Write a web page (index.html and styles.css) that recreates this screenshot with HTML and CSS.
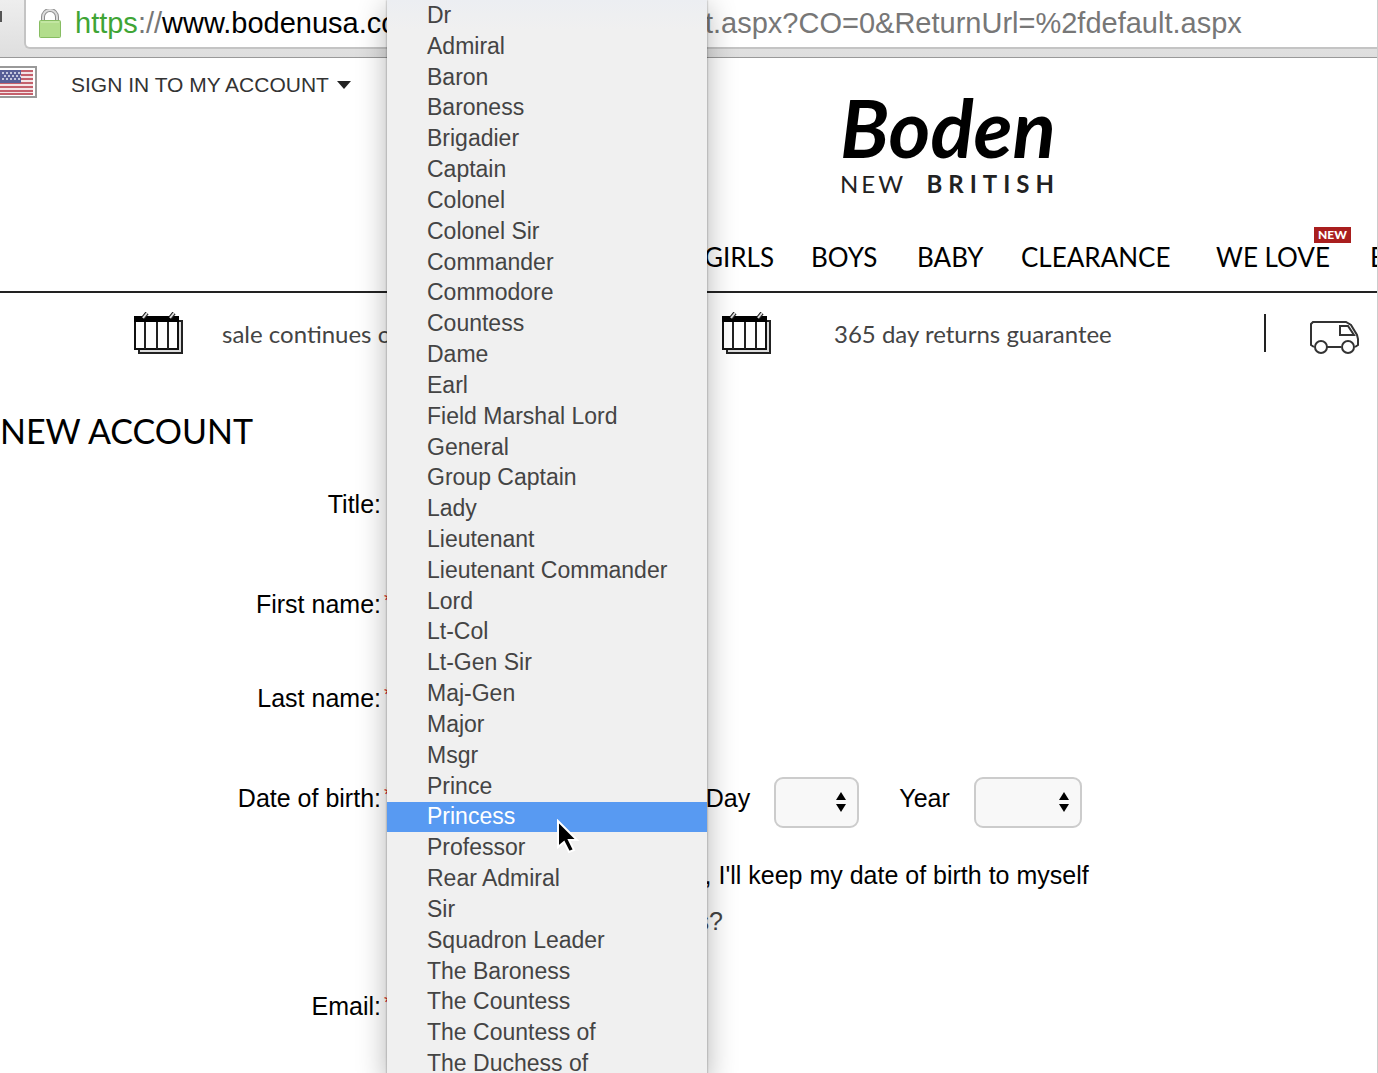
FILE: index.html
```html
<!DOCTYPE html>
<html lang="en">
<head>
    <meta charset="UTF-8">
    <meta name="viewport" content="width=device-width, initial-scale=1.0">
    <title>Boden - New Account</title>
    <link rel="stylesheet" href="styles.css">
</head>
<body>
    <!-- Browser toolbar -->
    <div class="toolbar">
        <span class="toolbar-button"></span>
        <div class="address">
            <svg class="lock" width="22" height="30" viewBox="0 0 22 30">
                <path d="M4 13V8a7 7 0 0 1 14 0v5" fill="none" stroke="#8c8c8c" stroke-width="4"/>
                <path d="M4 13V8a7 7 0 0 1 14 0v5" fill="none" stroke="#dcdcdc" stroke-width="2"/>
                <rect x="0.5" y="11.500" width="21" height="17" rx="1" fill="#b2dd8c" stroke="#87bd62"/>
                <path d="M2 13h18" stroke="#d3efb8"/>
            </svg>
            <div class="url">
                <span class="url-host"><span class="secure">https</span><span class="muted">://</span>www.bodenusa.com</span>
                <span class="url-path">t.aspx?CO=0&amp;ReturnUrl=%2fdefault.aspx</span>
            </div>
        </div>
    </div>

    <header>
        <div class="account-bar">
            <svg class="flag" width="37" height="32" viewBox="0 0 37 32">
                <rect x="-2" y="1" width="38" height="30" fill="#fff" stroke="#999" stroke-width="2"/>
                <rect x="0" y="4" width="33" height="25" fill="#f3e4e6"/>
                <path d="M0 5h33M0 9h33M0 13h33M0 17h33M0 21h33M0 25h33M0 28h33" stroke="#c4606c" stroke-width="2"/>
                <rect x="0" y="4" width="21" height="13" fill="#585f97"/>
                <path d="M2 7h19M4 10h17M2 13h19" stroke="#c5c8de" stroke-width="2" stroke-dasharray="2 2"/>
            </svg>
            <a href="#" class="sign-in">SIGN IN TO MY ACCOUNT
                <svg width="14" height="8" viewBox="0 0 14 8"><path d="M0 0h14L7 8z" fill="#222"/></svg>
            </a>
        </div>
        <a href="#" class="logo">
            <span class="logo-name">Boden</span>
            <span class="logo-tag">NEW <b>BRITISH</b></span>
        </a>
        <nav>
            <a href="#">GIRLS</a>
            <a href="#">BOYS</a>
            <a href="#">BABY</a>
            <a href="#">CLEARANCE</a>
            <a href="#">WE LOVE<span class="badge">NEW</span></a>
            <a href="#">EXPLORE</a>
        </nav>
    </header>

    <!-- Promotions strip -->
    <div class="promos">
        <div class="promo">
            <svg width="50" height="42" viewBox="0 0 50 42">
                <path d="M5 37v4h43V9h-4" fill="#ddd" stroke="#222" stroke-width="2"/>
                <rect x="1" y="6" width="43" height="31" fill="#fff" stroke="#111" stroke-width="2"/>
                <path d="M0 4h45v6H0z" fill="#000"/>
                <path d="M11 10v27M23 10v27M34 10v27" stroke="#222" stroke-width="2"/>
                <path d="M9 6l4-5M36 6l4-5" stroke="#222" stroke-width="4"/>
                <path d="M9 6l4-5M36 6l4-5" stroke="#ddd" stroke-width="2"/>
            </svg>
            <span>sale continues online</span>
        </div>
        <div class="promo promo-wide">
            <svg width="50" height="42" viewBox="0 0 50 42">
                <path d="M5 37v4h43V9h-4" fill="#ddd" stroke="#222" stroke-width="2"/>
                <rect x="1" y="6" width="43" height="31" fill="#fff" stroke="#111" stroke-width="2"/>
                <path d="M0 4h45v6H0z" fill="#000"/>
                <path d="M11 10v27M23 10v27M34 10v27" stroke="#222" stroke-width="2"/>
                <path d="M9 6l4-5M36 6l4-5" stroke="#222" stroke-width="4"/>
                <path d="M9 6l4-5M36 6l4-5" stroke="#ddd" stroke-width="2"/>
            </svg>
            <span>365 day returns guarantee</span>
        </div>
        <div class="promo">
            <svg class="van" width="50" height="34" viewBox="0 0 50 34" fill="none" stroke="#333" stroke-width="2">
                <path d="M4 26L1 24V3l2-2h33l5 3 6 10 1 4v6l-3 2M17 26h14"/>
                <path d="M31 5h7l6 9H30V5z"/>
                <circle cx="11" cy="26" r="6"/>
                <circle cx="38" cy="26" r="6"/>
            </svg>
        </div>
    </div>

    <main>
        <h1>NEW ACCOUNT</h1>
        <form>
            <div class="row row-tall">
                <label for="title">Title:</label>
                <div class="field field-plain">
                    <select id="title"><option>Princess</option></select>
                </div>
            </div>
            <div class="row">
                <label for="firstName">First name:</label>
                <div class="field"><span class="required">*</span><input type="text" id="firstName"></div>
            </div>
            <div class="row row-tall">
                <label for="lastName">Last name:</label>
                <div class="field"><span class="required">*</span><input type="text" id="lastName"></div>
            </div>
            <div class="row row-birth">
                <label for="month">Date of birth:</label>
                <div class="field">
                    <span class="required">*</span>
                    <div class="month"><select id="month"><option></option></select></div>
                    <label for="day">Day</label>
                    <span class="select-box">
                        <select id="day" class="select-day"><option></option></select>
                        <svg width="10" height="20" viewBox="0 0 10 20"><path d="M0 8h10L5 0zM0 12h10l-5 8z"/></svg>
                    </span>
                    <label for="year" class="year-label">Year</label>
                    <span class="select-box">
                        <select id="year" class="select-year"><option></option></select>
                        <svg width="10" height="20" viewBox="0 0 10 20"><path d="M0 8h10L5 0zM0 12h10l-5 8z"/></svg>
                    </span>
                </div>
            </div>
            <div class="note">
                <input type="checkbox" id="noBirth">
                <label for="noBirth">No thanks, I'll keep my date of birth to myself</label>
            </div>
            <div class="why"><a href="#">Why do we ask this?</a></div>
            <div class="row">
                <label for="email">Email:</label>
                <div class="field"><span class="required">*</span><input type="email" id="email"></div>
            </div>
        </form>
    </main>

    <!-- Open list of the title drop-down -->
    <ul class="menu" role="listbox" aria-label="Title">
        <li role="option">Dr</li>
        <li role="option">Admiral</li>
        <li role="option">Baron</li>
        <li role="option">Baroness</li>
        <li role="option">Brigadier</li>
        <li role="option">Captain</li>
        <li role="option">Colonel</li>
        <li role="option">Colonel Sir</li>
        <li role="option">Commander</li>
        <li role="option">Commodore</li>
        <li role="option">Countess</li>
        <li role="option">Dame</li>
        <li role="option">Earl</li>
        <li role="option">Field Marshal Lord</li>
        <li role="option">General</li>
        <li role="option">Group Captain</li>
        <li role="option">Lady</li>
        <li role="option">Lieutenant</li>
        <li role="option">Lieutenant Commander</li>
        <li role="option">Lord</li>
        <li role="option">Lt-Col</li>
        <li role="option">Lt-Gen Sir</li>
        <li role="option">Maj-Gen</li>
        <li role="option">Major</li>
        <li role="option">Msgr</li>
        <li role="option">Prince</li>
        <li role="option" class="active" aria-selected="true">Princess
            <svg class="cursor" width="24" height="38" viewBox="0 0 24 38">
                <path d="M2 2v26l6-5 5 10 5-2-5-10h8z" fill="#000" stroke="#fff" stroke-width="2"/>
            </svg>
        </li>
        <li role="option">Professor</li>
        <li role="option">Rear Admiral</li>
        <li role="option">Sir</li>
        <li role="option">Squadron Leader</li>
        <li role="option">The Baroness</li>
        <li role="option">The Countess</li>
        <li role="option">The Countess of</li>
        <li role="option">The Duchess of</li>
    </ul>
</body>
</html>
```
FILE: styles.css
```css
:root {
    --text-color: #000;
    --menu-bg: #f0f0f0;
    --highlight: #589af2;
    --brand-font: Lato, sans-serif;
}

* {
    box-sizing: border-box;
}

body {
    margin: 0;
    position: relative;
    height: 100vh;
    overflow: hidden;
    border-right: 1px solid #ccc;
    font-family: "Liberation Sans", Arial, sans-serif;
    font-size: 25px;
    color: var(--text-color);
    background-color: #fff;
}

a {
    color: inherit;
    text-decoration: none;
}

svg {
    display: block;
    flex: none;
}

/* Browser toolbar */
.toolbar {
    display: flex;
    align-items: flex-start;
    height: 58px;
    border-bottom: 1px solid #999;
    background: linear-gradient(#eee, #dedede);
}

.toolbar-button {
    width: 2px;
    height: 11px;
    margin: 11px 22px 0 0;
    background-color: #555;
}

.address {
    display: flex;
    align-items: center;
    flex: 1;
    height: 49px;
    padding-left: 13px;
    border: 2px solid #c4c4c4;
    border-width: 0 0 2px 2px;
    border-radius: 0 0 0 6px;
    background-color: #fff;
}

.url {
    display: flex;
    margin-left: 14px;
    font-size: 29px;
    white-space: nowrap;
}

.url-host {
    width: 630px;
    color: #000;
}

.secure {
    color: #3fa535;
}

.muted,
.url-path {
    color: #777;
}

/* Site header */
header {
    display: grid;
    grid-template-columns: 840px 1fr;
    grid-template-rows: 164px 69px;
    border-bottom: 2px solid #222;
    margin-bottom: -2px;
}

.account-bar {
    display: flex;
    align-items: flex-start;
    margin-top: 8px;
}

.sign-in {
    display: flex;
    align-items: center;
    gap: 8px;
    margin-left: 34px;
    font-size: 21px;
    line-height: 38px;
    color: #333;
}

.logo {
    width: 220px;
    padding-top: 24px;
    font-family: var(--brand-font);
    color: #000;
}

.logo-name {
    display: block;
    font-size: 80px;
    line-height: 90px;
    font-style: italic;
    font-weight: 700;
}

.logo-tag {
    display: flex;
    justify-content: space-between;
    font-size: 24px;
    line-height: 24px;
    letter-spacing: 3px;
    color: #222;
}

.logo-tag b {
    letter-spacing: 6px;
}

nav {
    grid-column: 1 / 3;
    display: grid;
    grid-template-columns: 107px 106px 104px 195px 154px auto;
    align-items: center;
    padding-left: 704px;
    overflow: hidden;
    font-family: var(--brand-font);
    font-size: 26px;
    white-space: nowrap;
}

nav a {
    position: relative;
}

.badge {
    position: absolute;
    top: -14px;
    left: 98px;
    padding: 0 4px;
    font-size: 12px;
    line-height: 16px;
    font-weight: 900;
    color: #fff;
    background-color: #a91e1e;
}

/* Promotions */
.promos {
    display: flex;
    height: 88px;
    padding: 21px 0 0 88px;
    overflow: hidden;
    font-family: var(--brand-font);
    font-size: 24px;
    color: #444;
}

.promo {
    display: flex;
    align-items: center;
    flex: none;
    gap: 38px;
    width: 588px;
    height: 42px;
    padding-left: 46px;
}

.promo + .promo {
    background: linear-gradient(#222, #222) 0 2px / 2px 38px no-repeat;
}

.promo-wide {
    gap: 62px;
}

.van {
    margin-top: 10px;
}

/* Registration form */
h1 {
    margin: 30px 0 0;
    font-family: var(--brand-font);
    font-size: 34px;
    line-height: 44px;
    font-weight: 400;
}

form {
    padding-top: 29px;
    line-height: 44px;
}

.row {
    display: grid;
    grid-template-columns: 381px 1fr;
    align-items: start;
    height: 94px;
}

.row-tall {
    height: 100px;
}

.row-birth {
    height: 74px;
}

.row > label {
    text-align: right;
}

.field {
    display: flex;
    align-items: flex-start;
    height: 51px;
}

.field-plain {
    padding-left: 20px;
}

.field input {
    width: 290px;
    height: 50px;
}

.field select {
    appearance: none;
    width: 200px;
    height: 51px;
    border: 2px solid #ccc;
    border-radius: 9px;
    background-color: #f8f8f8;
}

.required {
    margin: 0 8px 0 3px;
    line-height: 36px;
    font-size: 20px;
    color: #d22;
}

.month {
    width: 306px;
}

.select-box {
    position: relative;
    margin-left: 24px;
}

.select-box svg {
    position: absolute;
    top: 16px;
    right: 13px;
    pointer-events: none;
}

.field .select-day {
    width: 85px;
}

.field .select-year {
    width: 108px;
}

.year-label {
    margin-left: 40px;
}

.note {
    display: flex;
    align-items: center;
    height: 49px;
    padding-left: 560px;
}

.note input {
    width: 20px;
    height: 20px;
    margin: 0 12px 0 0;
}

.why {
    width: 723px;
    height: 85px;
    text-align: right;
    color: #444;
}

/* Drop-down list */
.menu {
    position: absolute;
    top: 0;
    bottom: -6px;
    left: 387px;
    width: 320px;
    display: flex;
    flex-direction: column;
    margin: 0;
    padding: 0;
    list-style: none;
    font-size: 23px;
    color: #444;
    background: linear-gradient(#eceef2, var(--menu-bg) 30px);
    box-shadow: 0 0 2px rgba(0, 0, 0, 0.4), 0 6px 28px rgba(0, 0, 0, 0.3);
}

.menu li {
    flex: 1;
    display: flex;
    align-items: center;
    min-height: 0;
    padding-left: 40px;
}

.menu .active {
    position: relative;
    color: #fff;
    background-color: var(--highlight);
}

.cursor {
    position: absolute;
    top: 17px;
    left: 169px;
    z-index: 1;
}
```
